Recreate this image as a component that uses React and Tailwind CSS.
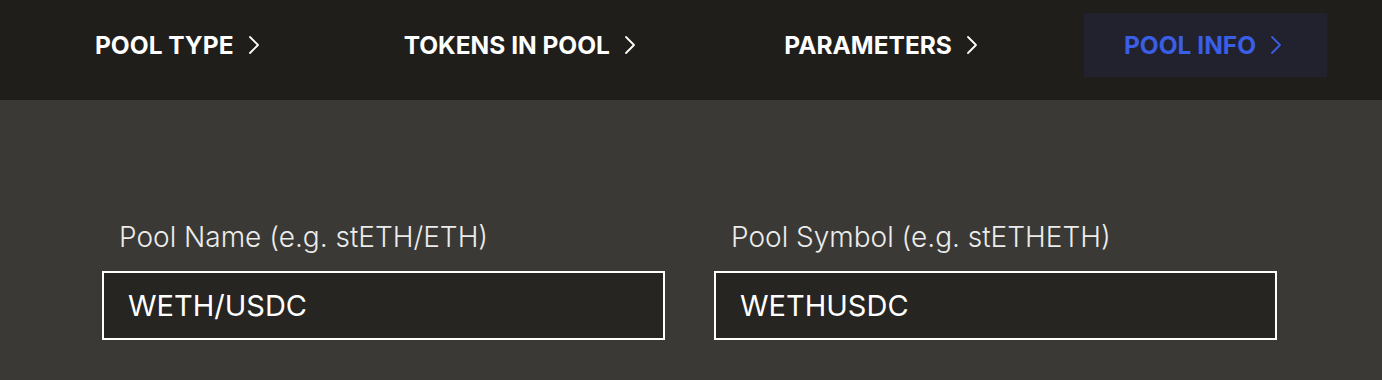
import { useState } from "react";

const steps = [
  { label: "POOL TYPE", width: "w-[242px]", active: false },
  { label: "TOKENS IN POOL", width: "w-[314px]", active: false },
  { label: "PARAMETERS", width: "w-[273px]", active: false },
  { label: "POOL INFO", width: "w-[243px]", active: true },
];

function Chevron({ className }) {
  return (
    <svg width="12" height="20" viewBox="0 0 12 20" fill="none" className={className}>
      <polyline points="2,2 10,10 2,18" stroke="currentColor" strokeWidth="1.8" strokeLinecap="round" strokeLinejoin="round" />
    </svg>
  );
}

export default function App() {
  const [name, setName] = useState("WETH/USDC");
  const [symbol, setSymbol] = useState("WETHUSDC");

  return (
    <div className="min-h-[380px] bg-[#3a3935] font-[Inter,sans-serif]">
      {/* Steps */}
      <div className="h-[100px] bg-[#1f1e1b] flex items-start justify-between px-[55px] pt-[13px]">
        {steps.map((s) => (
          <button
            key={s.label}
            className={
              "h-[64px] pl-10 shrink-0 flex items-center justify-start gap-[14px] whitespace-nowrap text-[24.5px] font-bold " +
              s.width +
              (s.active ? " bg-[#21222d] text-[#3a5ee6]" : " text-white")
            }
          >
            <span>{s.label}</span>
            <Chevron className="shrink-0" />
          </button>
        ))}
      </div>

      {/* Form */}
      <div className="grid grid-cols-2 gap-[49px] pl-[102px] pr-[105px] pt-[119px]">
        <div className="flex flex-col">
          <label className="pl-[17px] text-[28px] font-light text-[#ececec] leading-[36px]">
            Pool Name (e.g. stETH/ETH)
          </label>
          <input
            value={name}
            onChange={(e) => setName(e.target.value)}
            className="mt-[16px] h-[69px] border-2 border-white bg-[#262521] px-[24px] text-[29px] text-white outline-none"
          />
        </div>
        <div className="flex flex-col">
          <label className="pl-[17px] text-[28px] font-light text-[#ececec] leading-[36px]">
            Pool Symbol (e.g. stETHETH)
          </label>
          <input
            value={symbol}
            onChange={(e) => setSymbol(e.target.value)}
            className="mt-[16px] h-[69px] border-2 border-white bg-[#262521] px-[24px] text-[29px] text-white outline-none"
          />
        </div>
      </div>
    </div>
  );
}
